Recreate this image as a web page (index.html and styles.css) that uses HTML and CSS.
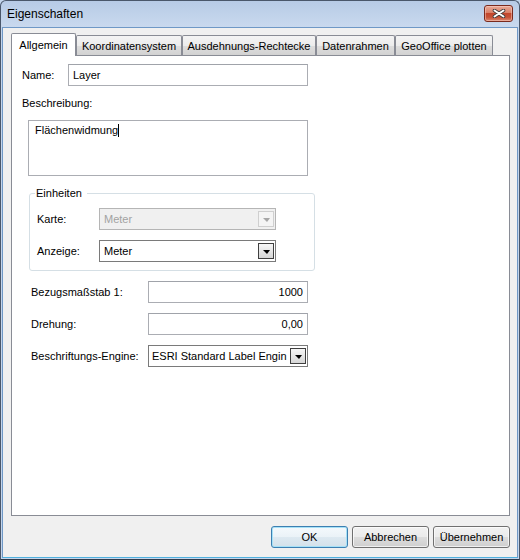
FILE: index.html
```html
<!DOCTYPE html>
<html lang="de">
<head>
<meta charset="utf-8">
<title>Eigenschaften</title>
<link rel="stylesheet" href="styles.css">
</head>
<body>
<div class="window">
  <div class="titlebar">
    <span class="title">Eigenschaften</span>
    <div class="close">
      <svg width="14" height="9" viewBox="0 0 14 9">
        <path d="M2.5 1.5 L11.5 7.5 M11.5 1.5 L2.5 7.5" stroke="#3b3b3b" stroke-width="3.6" stroke-linecap="round" fill="none"/>
        <path d="M2.5 1.5 L11.5 7.5 M11.5 1.5 L2.5 7.5" stroke="#ffffff" stroke-width="2" stroke-linecap="round" fill="none"/>
      </svg>
    </div>
  </div>
  <div class="client">
    <div class="tabs">
      <div class="tab active tab-allg">Allgemein</div>
      <div class="tab tab-koord">Koordinatensystem</div>
      <div class="tab tab-ausd">Ausdehnungs-Rechtecke</div>
      <div class="tab tab-daten">Datenrahmen</div>
      <div class="tab tab-geo">GeoOffice plotten</div>
    </div>
    <div class="panel">
      <div class="row">
        <span class="lbl lbl-name">Name:</span>
        <div class="field w-name">Layer</div>
      </div>
      <div class="lbl desc-lbl">Beschreibung:</div>
      <div class="textarea">Flächenwidmung<span class="caret"></span></div>
      <fieldset class="group">
        <legend>Einheiten</legend>
        <div class="row">
          <span class="lbl lbl-unit">Karte:</span>
          <div class="combo disabled w-unit"><span class="combo-text">Meter</span><span class="drop"><span class="arrow"></span></span></div>
        </div>
        <div class="row gap-top">
          <span class="lbl lbl-unit">Anzeige:</span>
          <div class="combo w-unit"><span class="combo-text">Meter</span><span class="drop"><span class="arrow"></span></span></div>
        </div>
      </fieldset>
      <div class="row prop first">
        <span class="lbl lbl-prop">Bezugsmaßstab 1:</span>
        <div class="field num w-prop">1000</div>
      </div>
      <div class="row prop">
        <span class="lbl lbl-prop">Drehung:</span>
        <div class="field num w-prop">0,00</div>
      </div>
      <div class="row prop">
        <span class="lbl lbl-prop">Beschriftungs-Engine:</span>
        <div class="combo w-prop"><span class="combo-text engine">ESRI Standard Label Engin</span><span class="drop"><span class="arrow"></span></span></div>
      </div>
    </div>
    <div class="buttons">
      <div class="btn default">OK</div>
      <div class="btn">Abbrechen</div>
      <div class="btn">Übernehmen</div>
    </div>
  </div>
</div>
</body>
</html>
```
FILE: styles.css
```css
html, body {
  margin: 0;
  padding: 0;
  background: #c3d5ec;
}
body {
  font-family: "Liberation Sans", Arial, sans-serif;
  font-size: 11px;
  color: #000;
}
.window {
  width: 520px;
  height: 560px;
  box-sizing: border-box;
  border: 1px solid #4a576b;
  border-bottom-color: #2f3a4a;
  border-radius: 6px 6px 0 0;
  background: linear-gradient(#b7cbe6 0, #c9d9ee 26px, #c3d5ec 26px);
  display: flex;
  flex-direction: column;
  overflow: hidden;
}
.titlebar {
  flex: none;
  height: 26px;
  display: flex;
  justify-content: space-between;
  align-items: center;
  padding: 0 6px 0 6px;
}
.title {
  font-size: 12px;
  color: #000;
  line-height: 16px;
}
.close {
  align-self: flex-start;
  margin-top: 4px;
  width: 29px;
  height: 17px;
  box-sizing: border-box;
  border: 1px solid #7a2a1e;
  border-radius: 3px;
  background: linear-gradient(#e9aa98 0, #d98068 45%, #c3462c 50%, #c65237 75%, #dc8a72 100%);
  box-shadow: inset 0 0 0 1px rgba(255, 220, 210, 0.45);
  display: flex;
  align-items: center;
  justify-content: center;
}
.client {
  flex: 1;
  margin: 0 1px 1px 1px;
  border: 1px solid #6f98c6;
  border-bottom-color: #4fb0de;
  background: #f0f0f0;
  padding: 5px 7px 9px 8px;
  display: flex;
  flex-direction: column;
  min-height: 0;
}
.tabs {
  flex: none;
  height: 22px;
  display: flex;
  align-items: flex-end;
}
.tab {
  box-sizing: border-box;
  height: 20px;
  border: 1px solid #898c95;
  border-bottom: none;
  background: linear-gradient(#f4f4f4 0, #ececec 50%, #dedede 50%, #d2d2d2 100%);
  text-align: center;
  line-height: 20px;
  white-space: nowrap;
  border-radius: 2px 2px 0 0;
}
.tab.active {
  position: relative;
  z-index: 1;
  height: 23px;
  margin-bottom: -1px;
  background: #ffffff;
  line-height: 22px;
}
.tab-allg { width: 65px; }
.tab-koord { width: 106px; }
.tab-ausd { width: 134px; }
.tab-daten { width: 79px; }
.tab-geo { width: 98px; }
.panel {
  flex: 1;
  border: 1px solid #898c95;
  background: #ffffff;
  padding: 8px 10px 0 10px;
  min-height: 0;
}
.row {
  display: flex;
  align-items: center;
}
.lbl {
  line-height: 14px;
  white-space: nowrap;
}
.lbl-name { width: 46px; }
.desc-lbl { margin-top: 10px; }
.field {
  box-sizing: border-box;
  height: 22px;
  border: 1px solid #abadb3;
  border-top-color: #a0a3aa;
  background: #fff;
  padding: 0 4px;
  line-height: 20px;
  white-space: nowrap;
}
.field.num { text-align: right; }
.w-name { width: 240px; }
.w-prop { width: 160px; }
.w-unit { width: 177px; }
.textarea {
  box-sizing: border-box;
  margin: 10px 0 0 6px;
  width: 280px;
  height: 56px;
  border: 1px solid #abadb3;
  padding: 2px 6px;
  line-height: 14px;
}
.caret {
  display: inline-block;
  width: 1px;
  height: 13px;
  background: #000;
  vertical-align: -3px;
}
.group {
  box-sizing: border-box;
  margin: 11px 0 0 7px;
  width: 286px;
  border: 1px solid #d5dfe5;
  border-radius: 3px;
  padding: 8px 6px 8px 5px;
  min-width: 0;
}
.group legend {
  padding: 0 5px 0 1px;
  line-height: 13px;
}
.lbl-unit {
  margin-left: 2px;
  width: 62px;
}
.gap-top { margin-top: 10px; }
.combo {
  box-sizing: border-box;
  height: 22px;
  border: 1px solid #7a7a7a;
  background: #fff;
  display: flex;
  align-items: center;
  justify-content: space-between;
}
.combo-text {
  padding-left: 4px;
  white-space: nowrap;
}
.combo-text.engine { padding-left: 3px; }
.drop {
  box-sizing: border-box;
  width: 16px;
  height: 16px;
  margin-right: 1px;
  border: 1px solid #3f3f3f;
  background: linear-gradient(#f6f6f6 0, #e6e6e6 50%, #d6d6d6 100%);
  display: flex;
  align-items: center;
  justify-content: center;
}
.arrow {
  width: 0;
  height: 0;
  border-left: 4px solid transparent;
  border-right: 3px solid transparent;
  border-top: 4px solid #000;
  margin-top: 1px;
}
.combo.disabled {
  border-color: #b5b5b5;
  background: #f0f0f0;
  color: #a2a2a2;
}
.combo.disabled .drop {
  border-color: #cfcfcf;
  background: #f4f4f4;
}
.combo.disabled .arrow {
  border-top-color: #a6a6a6;
}
.prop { margin-top: 10px; }
.lbl-prop {
  margin-left: 9px;
  width: 117px;
}
.buttons {
  flex: none;
  margin-top: 10px;
  height: 22px;
  display: flex;
  justify-content: flex-end;
  gap: 4px;
}
.btn {
  box-sizing: border-box;
  width: 77px;
  height: 22px;
  border: 1px solid #707070;
  border-radius: 3px;
  background: linear-gradient(#f2f2f2 0, #ebebeb 50%, #dddddd 50%, #cfcfcf 100%);
  box-shadow: inset 0 0 0 1px rgba(255, 255, 255, 0.7);
  text-align: center;
  line-height: 20px;
}
.btn.default {
  border-color: #3c7fb1;
  background: linear-gradient(#f4f9fc 0, #eaf2f7 50%, #dde9f1 50%, #d3e1ea 100%);
  box-shadow: inset 0 0 0 1px #a6e1f7;
}
```
